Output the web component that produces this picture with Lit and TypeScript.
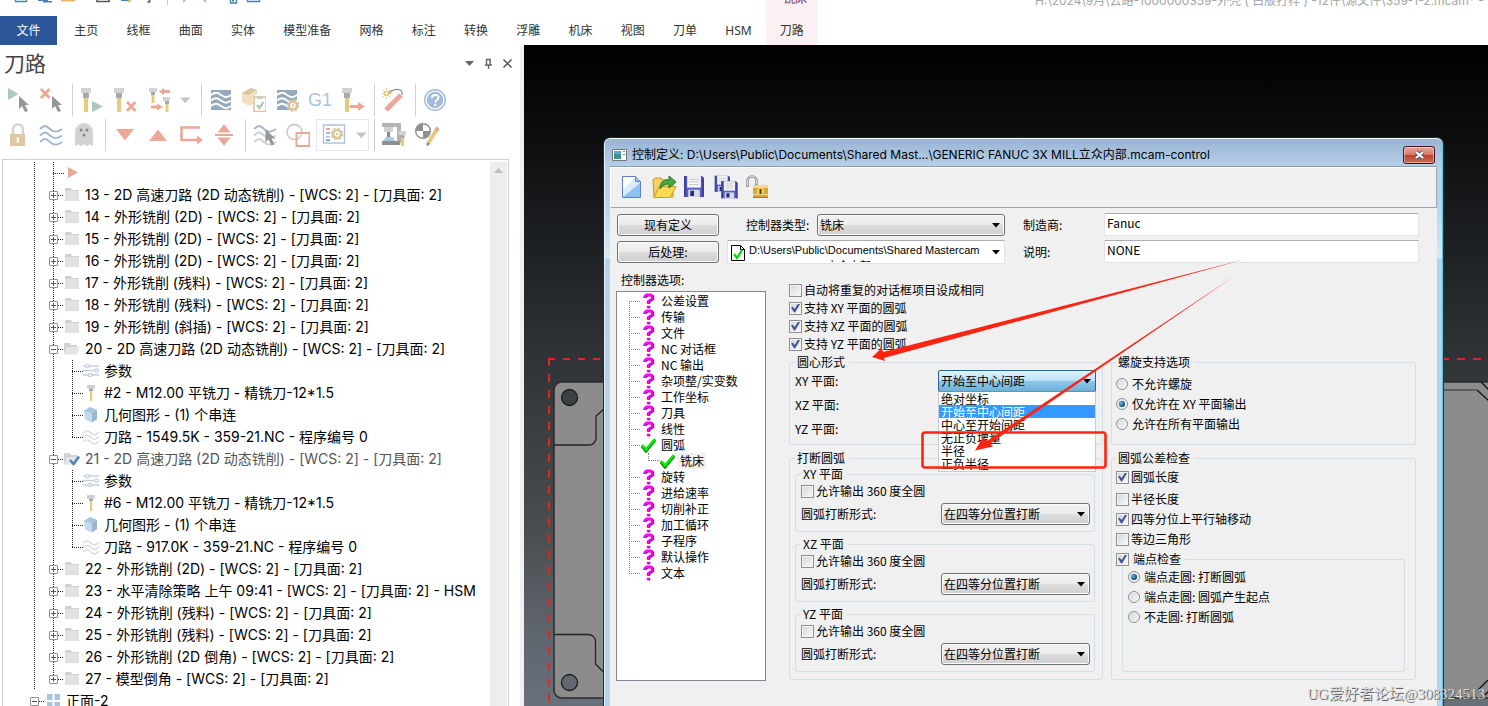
import { LitElement, html, svg, css, nothing } from "lit";
import { customElement } from "lit/decorators.js";
import { classMap } from "lit/directives/class-map.js";

const cjk = css`"Noto Sans CJK SC", sans-serif`;
const ui = css`"Noto Sans", "Noto Sans CJK SC", sans-serif`;
const wide = css`Inter, "Noto Sans CJK SC", sans-serif`;

/* ---------- shared drawing parts ---------- */

const icon = (body: unknown, w = 24, h = 24) =>
  html`<svg width=${w} height=${h} viewBox="0 0 ${w} ${h}" fill="none" aria-hidden="true">${body}</svg>`;

const cursor = (x: number, y: number) =>
  svg`<path transform="translate(${x} ${y})" d="M0 0v13l3-3 3 6 3-1-3-6h4z" fill="#979797"/>`;
const cross = (x: number, y: number) =>
  svg`<path transform="translate(${x} ${y})" d="M1 1l8.500 9M9.500 1L1 10" stroke="#eba898" stroke-width="2.800"/>`;
const cutter = svg`<path d="M1 0h10v5H1z" fill="#d3d3d3"/><path d="M3 5h6v5H3z" fill="#a9a9a9"/><path d="M4 10h4v14H4z" fill="#e8ca7d"/>`;
const smallCutter = (x: number, y: number) =>
  svg`<g transform="translate(${x} ${y})"><path d="M0 0h8v4H0z" fill="#d3d3d3"/><path d="M2 4h4v3H2z" fill="#a9a9a9"/><path d="M2.500 7h3v8h-3z" fill="#e8ca7d"/></g>`;
const waveBox = svg`<path d="M2 2h20v20H2z" fill="#95a9bd"/><path d="M2 7c4-3 6-3 10 0s6 3 10 0M2 12.500c4-3 6-3 10 0s6 3 10 0M2 18c4-3 6-3 10 0s6 3 10 0" stroke="#fff" stroke-width="1.800"/>`;
const waves = (a: string, b: string) =>
  svg`<path d="M1 6c4-4 6-4 10 0s8 3 12 0" stroke=${a} stroke-width="1.800"/><path d="M1 12.500c4-4 6-4 10 0s8 3 12 0M1 19c4-4 6-4 10 0s8 3 12 0" stroke=${b} stroke-width="1.800"/>`;
const gear = (x: number, y: number) =>
  svg`<g transform="translate(${x} ${y})"><circle r="4" fill="#fff" stroke="#dbc49b" stroke-width="2.600"/><circle r="5.600" stroke="#dbc49b" stroke-width="1.600" stroke-dasharray="2.200 2.200"/><circle r="1.200" fill="#dbc49b"/></g>`;

const toolIcons: Record<string, unknown> = {
  selectAll: svg`<path d="M2 0l10.500 6L2 12z" fill="#a9c9bb"/>${cursor(13, 8)}`,
  selectNone: svg`${cross(1, 0)}${cursor(13, 8)}`,
  regen: svg`${cutter}<path d="M12 13l11 5.500L12 24z" fill="#a9c9bb"/>`,
  regenDirty: svg`${cutter}${cross(13, 13)}`,
  swap: svg`${smallCutter(3, 0)}${smallCutter(17, 9)}<path d="M24 3.500h-7M5 19h7" stroke="#eba898" stroke-width="3"/><path d="M18 0v7l-5-3.500zM11 15.500v7l6-3.500z" fill="#eba898"/>`,
  backplot: waveBox,
  verify: svg`<path d="M0 5l9-5 6 2v4l-4 3v7l-4 2-7-4z" fill="#f2dfbf"/><path d="M0 5l9-5 6 2-9 5z" fill="#d9c3a0"/><path d="M12 9h12v14.500H12z" fill="#fff" stroke="#dbc49b" stroke-width="1.500"/><path d="M15 8h6v3h-6z" fill="#c9c9c9"/><path d="M15 17l2.500 3 4-6" stroke="#a0c6b3" stroke-width="2"/>`,
  simulate: svg`${waveBox}${gear(18, 17.5)}`,
  post: svg`${cutter}<path d="M9 18.500h9" stroke="#eba898" stroke-width="3"/><path d="M17 14v9l7-4.500z" fill="#eba898"/>`,
  wand: svg`<path d="M4 22L19 7" stroke="#eba898" stroke-width="5"/><path d="M7 5c5-5 15-5 13 2" stroke="#8c8c8c" stroke-width="1.200"/><circle cx="4.500" cy="5.500" r="2" stroke="#e8ca7d" stroke-width="1.400"/><path d="M4.500 0v2M4.500 9v2M0 5.500h2M7 5.500h2.500M1 2l1.500 1.500M8 2L6.500 3.500M1 9l1.500-1.500M8 9L6.500 7.500" stroke="#e8ca7d"/>`,
  help: svg`<circle cx="12" cy="12" r="10.300" stroke="#a3bbd9" stroke-width="1.400"/><circle cx="12" cy="12" r="8.300" fill="#a3bbd9"/><path d="M9 10c0-4 6.500-4 6.500-.500 0 2.200-3.200 2.500-3.200 5M12.300 15.800v2.200" stroke="#fff" stroke-width="2"/>`,
  lock: svg`<path d="M7 12V6.500a5 5 0 0 1 10 0V12" stroke="#d3d3d3" stroke-width="2.400"/><path d="M4 11h15v12H4z" fill="#dfc9a5"/><path d="M10.500 14.500h2.500v2l-.500 3.500h-1.500z" fill="#fff"/>`,
  display: waves("#a3b8ce", "#a3b8ce"),
  ghost: svg`<path d="M3 23.500V9a9 9 0 0 1 18 0v14.500l-3-2.500-3 2.500-3-2.500-3 2.500-3-2.500z" fill="#d3d3d3"/><circle cx="9" cy="7" r="1.500" fill="#888"/><circle cx="15" cy="7" r="1.500" fill="#888"/><circle cx="12" cy="12" r="1.500" fill="#888"/>`,
  down: svg`<path d="M3 6h18l-9 11.500z" fill="#eba898"/>`,
  up: svg`<path d="M3 18h18L12 6.500z" fill="#eba898"/>`,
  loop: svg`<path d="M21 4.500H2.500v12.500H19" stroke="#eba898" stroke-width="2.600"/><path d="M18 12.500v9l6-4.500z" fill="#eba898"/>`,
  split: svg`<path d="M5.500 9.500L12 1l6.500 8.500zM5.500 14.500L12 23l6.500-8.500z" fill="#eba898"/><path d="M3 12h18" stroke="#eba898" stroke-width="2"/>`,
  wavesCursor: svg`${waves("#a3b8ce", "#cfcfcf")}${cursor(12.5, 6.5)}`,
  shapes: svg`<circle cx="8.500" cy="9" r="7.500" stroke="#cfcfcf" stroke-width="1.800"/><path d="M10.500 10h13v13h-13z" stroke="#eba898" stroke-width="2"/>`,
  list: svg`<path d="M1.500 2h21v18h-21z" stroke="#a9c4de" stroke-width="1.400"/><path d="M4 5h4v2H4z" fill="#eba898"/><path d="M4 9h4v2H4z" fill="#a0c6b3"/><path d="M4 13h4v1.500H4z" fill="#a9c4de"/><path d="M4 16.500h4v1.500H4z" fill="#888"/>${gear(15, 11)}`,
  machine: svg`<path d="M0 0h19v20h-4V4H0z" fill="#b4b4b4"/><path d="M2 4h9v5H2z" fill="#d3d3d3"/><path d="M5 9h3v5H5z" fill="#888"/><path d="M1 18l3-4h7l2 4z" fill="#a9cbe8"/><path d="M0 18h18v4H0z" fill="#8f8f8f"/>${smallCutter(16.5, 8)}`,
  pencil: svg`<circle cx="8" cy="8" r="7.300" fill="#fff" stroke="#8f8f8f" stroke-width="1.400"/><path d="M8 8V.700A7.300 7.300 0 0 0 .700 8zM8 8v7.300A7.300 7.300 0 0 0 15.300 8z" fill="#8f8f8f"/><path d="M22 6l-8.500 14" stroke="#e8ca7d" stroke-width="4"/><path d="M23 4.500l-2 3.500" stroke="#eba898" stroke-width="4"/><path d="M11.800 19l3.400 2-3.700 2.500z" fill="#888"/>`,
};

const caret = svg`<path d="M1 9.500h10.500L6.200 15.200z" fill="#c4c4c4"/>`;

const treeIcons: Record<string, unknown> = {
  arrow: svg`<path d="M4 2l10 5.500L4 13z" fill="#eba898"/>`,
  folder: svg`<path d="M1 1h6l1 2h7v3H1z" fill="#d2d2d5"/><path d="M1 4h14v10H1z" fill="#e2e2e4"/>`,
  open: svg`<path d="M0 2h6l1 2h6v9H0z" fill="#d2d2d5"/><path d="M3 6h13l-3 7.500H0z" fill="#e6e6e6"/>`,
  checked: svg`<path d="M0 2h6l1 2h6v9H0z" fill="#d2d2d5"/><path d="M3 6h13l-3 7.500H0z" fill="#e6e6e6"/><path d="M6 9l3.500 4L15 5.500" stroke="#4a83bd" stroke-width="2.400"/>`,
  params: svg`<path d="M0 3h16M0 7.500h16M0 12h16" stroke="#cdcdcd" stroke-width="1.400"/><g fill="#fff" stroke="#bdd3e8" stroke-width="1.300"><circle cx="4.500" cy="3" r="1.700"/><circle cx="13.500" cy="7.500" r="1.700"/><circle cx="7" cy="12" r="1.700"/></g>`,
  cutter: svg`<path d="M4 0h8v3.500H4z" fill="#cfcfcf"/><path d="M6 3.500h4V6H6z" fill="#a9a9a9"/><path d="M7 6h2.200v10H7z" fill="#e8ca7d"/>`,
  solid: svg`<path d="M1 4l6-4 7 3v9l-5 3.500-7-3z" fill="#c3d9ec"/><path d="M1 4l6-4 7 3-5 3z" fill="#a9c5de"/><path d="M9 6l5-3v9l-5 3.500z" fill="#9cb6cf"/>`,
  path: svg`<path d="M0 4c3-3 5-3 8 0s5 2 8-1M0 8.500c3-3 5-3 8 0s5 2 8-1M0 13c3-3 5-3 8 0s5 2 8-1" stroke="#dadada" stroke-width="1.300"/>`,
  group: svg`<path d="M2 1h5.500v6H2zM9.500 1H15v6H9.500zM2 9h5.500v6H2zM9.500 9H15v6H9.500z" fill="#a9c4de"/>`,
};

const ribbonTabs = ["主页", "线框", "曲面", "实体", "模型准备", "网格", "标注", "转换", "浮雕", "机床", "视图", "刀单", "HSM", "刀路"];

type TreeRow = { level: number; icon: string; text: string; state?: "+" | "-"; last?: boolean; dim?: boolean };
const op = (n: number, name: string): TreeRow => ({ level: 1, icon: "folder", state: "+", text: `${n} - ${name} - [WCS: 2] - [刀具面: 2]` });
const children = (tool: string, size: string): TreeRow[] => [
  { level: 2, icon: "params", text: "参数" },
  { level: 2, icon: "cutter", text: `${tool} - M12.00 平铣刀 - 精铣刀-12*1.5` },
  { level: 2, icon: "solid", text: "几何图形 - (1) 个串连" },
  { level: 2, icon: "path", text: `刀路 - ${size} - 359-21.NC - 程序编号 0`, last: true },
];
const treeRows: TreeRow[] = [
  { level: 1, icon: "arrow", text: "" },
  op(13, "2D 高速刀路 (2D 动态铣削)"),
  op(14, "外形铣削 (2D)"),
  op(15, "外形铣削 (2D)"),
  op(16, "外形铣削 (2D)"),
  op(17, "外形铣削 (残料)"),
  op(18, "外形铣削 (残料)"),
  op(19, "外形铣削 (斜插)"),
  { ...op(20, "2D 高速刀路 (2D 动态铣削)"), icon: "open", state: "-" },
  ...children("#2", "1549.5K"),
  { ...op(21, "2D 高速刀路 (2D 动态铣削)"), icon: "checked", state: "-", dim: true },
  ...children("#6", "917.0K"),
  op(22, "外形铣削 (2D)"),
  { level: 1, icon: "folder", state: "+", text: "23 - 水平清除策略 上午 09:41 - [WCS: 2] - [刀具面: 2] - HSM" },
  op(24, "外形铣削 (残料)"),
  op(25, "外形铣削 (残料)"),
  op(26, "外形铣削 (2D 倒角)"),
  { ...op(27, "模型倒角"), last: true },
  { level: 0, icon: "group", text: "正面-2", state: "-", last: true },
];

/* ---------- toolpath manager panel ---------- */

@customElement("toolpath-panel")
class ToolpathPanel extends LitElement {
  static styles = css`
    :host { display: flex; flex-direction: column; width: 524px; flex: none; box-sizing: border-box; background: #fff; border-right: 4px solid #f0f0f0; font-family: ${wide}; }
    button { appearance: none; border: 0; padding: 0; background: none; display: grid; place-items: center; font: inherit; }
    .head { display: flex; align-items: center; box-sizing: border-box; height: 37px; padding: 0 5px 4px 4px; }
    h1 { margin: 0 auto 0 0; font: 400 21px/28px ${cjk}; color: #444; }
    .head button { width: 15px; height: 16px; margin: 2px 0 0 4px; }
    .bars { display: grid; gap: 3px; padding: 2px 6px 8px; }
    .bar { display: flex; gap: 9px; height: 32px; }
    .bar button { width: 24px; }
    .bar .caret { width: 13px; }
    .bar .g1 { font: 18px/24px "Liberation Sans", sans-serif; color: #a9c4e0; }
    .sep { width: 1px; background: #d0d0d0; margin-right: -2px; }
    .split { display: flex; box-sizing: border-box; width: 53px; margin: 0 -4px 0 -3px; padding-left: 5px; gap: 9px; border: 1px solid #e8e8e8; }
    .treebox { flex: 1; min-height: 0; display: flex; margin: 0 11px 0 2px; border: 1px solid #d0d0d0; border-bottom: 0; }
    .tree { flex: 1; padding: 2px 0 0 27px; overflow: hidden; font-size: 14px; line-height: 20px; color: #000; }
    .row { display: flex; align-items: center; height: 22px; white-space: nowrap; }
    .row svg { flex: none; }
    .guide, .node { flex: none; align-self: stretch; width: 19px; background: repeating-linear-gradient(#222 0 1px, transparent 1px 2px) 4px 0 / 1px 22px no-repeat; }
    .node { width: 15px; display: grid; align-items: center; grid-template-columns: 9px 6px; }
    .node.half { background-size: 1px 11px; }
    .node.root { background: none; }
    .box { box-sizing: border-box; width: 9px; height: 9px; border: 1px solid #919191; border-radius: 1px; background: linear-gradient(#3a5a9c, #3a5a9c) center / 5px 1px no-repeat, #fff; }
    .box.plus { background: linear-gradient(#3a5a9c, #3a5a9c) center / 5px 1px no-repeat, linear-gradient(#3a5a9c, #3a5a9c) center / 1px 5px no-repeat, #fff; }
    .dash { height: 1px; background: linear-gradient(90deg, #222 50%, transparent 50%) 0 0 / 2px 1px repeat-x; }
    .dash.long { grid-column: 1 / 3; margin-left: 4px; }
    .text { margin-left: 5px; }
    .dim { color: #555; }
    .scroll { width: 17px; margin: 2px 1px 0 0; background: #ededed; display: grid; justify-items: center; align-content: start; padding-top: 5px; }
  `;
  private tool(name: string, label: string) {
    return html`<button aria-label=${label}>${icon(toolIcons[name])}</button>`;
  }
  private row(r: TreeRow) {
    const guides = Array.from({ length: r.level }, () => html`<span class="guide"></span>`);
    return html`<div class="row" role="treeitem">
      ${guides}
      <span class=${classMap({ node: true, half: !!r.last && r.level > 0, root: r.level === 0 })}>
        ${r.state ? html`<span class=${classMap({ box: true, plus: r.state === "+" })}></span><span class="dash"></span>` : html`<span class="dash long"></span>`}
      </span>
      ${icon(treeIcons[r.icon], 16, 16)}
      <span class=${classMap({ text: true, dim: !!r.dim })}>${r.text}</span>
    </div>`;
  }
  render() {
    const sep = html`<span class="sep"></span>`;
    const drop = html`<button class="caret" aria-label="更多">${icon(caret, 13, 24)}</button>`;
    return html`
      <div class="head">
        <h1>刀路</h1>
        <button aria-label="选项">${icon(svg`<path d="M3 6h9l-4.500 5z" fill="#666"/>`, 15, 16)}</button>
        <button aria-label="固定">${icon(svg`<path d="M5.500 4v5.500M5 4.500h5M9 4v5.500M4 10h7M7.500 10v4" stroke="#666" stroke-width="1.400"/>`, 15, 16)}</button>
        <button aria-label="关闭">${icon(svg`<path d="M3.500 4.500l8 8M11.500 4.500l-8 8" stroke="#555" stroke-width="1.500"/>`, 15, 16)}</button>
      </div>
      <div class="bars">
        <div class="bar">
          ${this.tool("selectAll", "选择全部")}${this.tool("selectNone", "取消选择")}${sep}
          ${this.tool("regen", "重新生成")}${this.tool("regenDirty", "重新生成无效")}${this.tool("swap", "替换刀具")}${drop}${sep}
          ${this.tool("backplot", "模拟")}${this.tool("verify", "验证")}${this.tool("simulate", "仿真")}
          <button class="g1">G1</button>${this.tool("post", "进给")}${sep}
          ${this.tool("wand", "高速")}${sep}${this.tool("help", "帮助")}
        </div>
        <div class="bar">
          ${this.tool("lock", "锁定")}${this.tool("display", "显示刀路")}${this.tool("ghost", "关闭后处理")}${sep}
          ${this.tool("down", "下移")}${this.tool("up", "上移")}${this.tool("loop", "插入")}${this.tool("split", "滚动")}${sep}
          ${this.tool("wavesCursor", "单选刀路")}${this.tool("shapes", "单选图形")}
          <span class="split">${this.tool("list", "显示选项")}${drop}</span>${sep}
          ${this.tool("machine", "机床")}${this.tool("pencil", "编辑")}
        </div>
      </div>
      <div class="treebox">
        <div class="tree" role="tree">${treeRows.map((r) => this.row(r))}</div>
        <div class="scroll">${icon(svg`<path d="M0 6h9L4.500 1z" fill="#bdbdbd"/>`, 9, 7)}</div>
      </div>`;
  }
}

/* ---------- control definition dialog ---------- */

const floppy = svg`<path d="M1 1h17l2 2v18H1z" fill="#5a5fc4"/><path d="M1 1h2v20H1zM18 1l2 2v18h-2z" fill="#3f3f9c"/><path d="M4 1h13v11H4z" fill="#f4f4f4"/><path d="M6 4h9M6 6.500h9M6 9h9" stroke="#c8c8c8"/><path d="M5 14h11v7H5z" fill="#d7d7e8"/><path d="M7 15h3.500v5H7z" fill="#26267c"/>`;

const dialogIcons = [
  svg`<path d="M1.500 1.500h13l5 5v16h-18z" fill="#dcebfb" stroke="#5b7fc0"/><path d="M2 22L19 8v14z" fill="#8fc0f5"/><path d="M2 2h12l-12 13z" fill="#fff"/><path d="M14.500 1.500v5h5" fill="#9cc6f5" stroke="#5b7fc0"/>`,
  svg`<path d="M1 5l2-2h6l1 2h11v17H2z" fill="#f6d264" stroke="#c8921a"/><path d="M2 22.500l5-11h17l-6 11z" fill="#ffd94f" stroke="#d49a1c"/><path d="M8 14c0-7 4-10 9-9V1l7 6-7 6V9c-4 0-6 1-9 5z" fill="#44a845" stroke="#1f7a28"/>`,
  svg`<g transform="scale(1.050)">${floppy}</g>`,
  svg`<g transform="scale(.800)">${floppy}</g><g transform="translate(6.500 5.500) scale(.850)">${floppy}</g>`,
  svg`<path d="M2.500 12V6a4.500 4.500 0 0 1 9 0v4" stroke="#8b8b8b" stroke-width="2.600"/><path d="M2.500 11V6a4.500 4.500 0 0 1 9 0v3" stroke="#e4e4e4"/><path d="M8 10h15v13H8z" fill="#e0a338"/><path d="M8 10h15v3H8zM8 19h15v1H8z" fill="#f6d98c"/><path d="M8 22h15v1H8z" fill="#b07a1a"/><circle cx="15.500" cy="16" r="3.500" fill="#f3cf74"/><path d="M14.500 14h2v5h-2z" fill="#5d3c05"/>`,
];

const controlOptions = ["公差设置", "传输", "文件", "NC 对话框", "NC 输出", "杂项整/实变数", "工作坐标", "刀具", "线性", "圆弧", "铣床", "旋转", "进给速率", "切削补正", "加工循环", "子程序", "默认操作", "文本"];
const question = svg`<g stroke-width="2.400"><path d="M2.500 5V3.700L4.500 2.200H8.500L10 3.500V6L6 9v2M6 13v2.300" stroke="#6a006a"/><path d="M1.500 5V3.500L3.500 1.800H7.500L9 3V5.800L5 8.500V11M5 12.800v2.400" stroke="#ff00ff"/></g>`;
const tick = svg`<path d="M1 9l4 5L14 3" stroke="#0a7a0a" stroke-width="3"/><path d="M1 8l4 4.500L14 2" stroke="#00f000" stroke-width="2.600"/>`;

@customElement("control-dialog")
class ControlDialog extends LitElement {
  static styles = css`
    :host { display: flex; flex-direction: column; box-sizing: border-box; padding: 0 7px; border: 1px solid #1c2a38; border-radius: 7px 7px 0 0; background: linear-gradient(#98b4d2, #b9d1ea 30px, #b9d1ea 60px, #dbe7f4 120px, #b9d1ea 121px); box-shadow: inset 0 1px #fff, inset 1px 0 #dff3fb, inset -1px 0 #4fc8e0; color: #000; font: 12px/16px ${cjk}; }
    * { box-sizing: border-box; }
    button, select, input { font: inherit; color: inherit; }
    .title { display: flex; align-items: center; height: 28px; padding: 5px 1px 0 1px; gap: 4px; font-family: ${wide}; white-space: nowrap; }
    .title h2 { flex: 1; margin: 0; font-size: 12px; font-weight: 400; }
    .close { display: grid; place-items: center; width: 32px; height: 18px; padding: 0; border: 1px solid #4a1220; border-radius: 3px; background: linear-gradient(#e5a79b, #d8796a 48%, #b9402c 50%, #cf6e54); box-shadow: inset 0 0 0 1px #ffffff66; }
    .content { flex: 1; min-height: 0; overflow: hidden; background: #f0f0f0; border-top: 1px solid #8f9cad; margin: 0 -1px; }
    .tools { display: flex; gap: 7px; height: 41px; padding: 7px 10px 0; border: 1px solid #fff; border-bottom-color: #a0a3ad; border-right-color: #a0a3ad; }
    .tools button { width: 24px; height: 24px; padding: 0; border: 0; background: none; }
    .form { display: grid; grid-template-columns: 102px 278px 74px 1fr; column-gap: 8px; row-gap: 4px; grid-auto-rows: 23px; align-items: center; padding: 5px 18px 0 7px; }
    .form .lead { padding-left: 10px; }
    .form input { min-width: 0; margin-left: 9px; }
    .push { height: 22px; padding: 0; border: 1px solid #707070; border-radius: 3px; background: linear-gradient(#f2f2f2, #ebebeb 50%, #dddddd 50%, #cfcfcf); box-shadow: inset 0 0 0 1px #fcfcfc; }
    .type { display: flex; align-items: center; justify-content: space-between; padding-left: 19px; }
    .pick { display: grid; align-items: center; width: 188px; }
    .pick.medium { width: 149px; }
    .pick.wide { width: 158px; position: relative; }
    .pick select { grid-area: 1 / 1; width: 100%; height: 22px; appearance: none; margin: 0; padding: 0 20px 0 2px; border: 1px solid #707070; border-radius: 3px; background: linear-gradient(#f2f2f2, #ebebeb 50%, #dddddd 50%, #cfcfcf); box-shadow: inset 0 0 0 1px #fcfcfc; }
    .pick.wide select { border-color: #2c628b; border-radius: 2px; background: linear-gradient(#e3f2fb, #b9dff5 50%, #8ec8e8 50%, #6db1da); box-shadow: none; }
    .pick > svg { grid-area: 1 / 1; justify-self: end; margin-right: 4px; pointer-events: none; }
    .field { height: 23px; padding: 0 2px 4px; border: 1px solid #e2e3ea; border-top-color: #abadb3; border-radius: 1px; background: #fff; outline: 0; }
    .path { display: flex; align-items: center; height: 24px; padding: 0 3px; border: 1px solid #e2e3ea; border-top-color: #abadb3; background: #fff; overflow: hidden; text-align: left; }
    .path svg { flex: none; }
    .path .lines { flex: 1; margin-left: 3px; font: 11px/16px "Liberation Sans", ${cjk}; height: 20px; overflow: hidden; white-space: nowrap; }
    .path .arrow { display: grid; }
    .cols { display: grid; grid-template-columns: 150px 314px 1fr; padding: 9px 21px 0 6px; }
    .side h3 { margin: 0 0 3px 5px; font-size: 12px; font-weight: 400; }
    .options { height: 390px; border: 1px solid #828790; background: #fff; padding: 1px 0 0 12px; }
    .item { display: flex; height: 16px; align-items: center; }
    .stem { flex: none; align-self: stretch; display: grid; align-items: center; width: 12px; background: repeating-linear-gradient(#808080 0 1px, transparent 1px 2px) 0 0 / 1px 16px no-repeat; }
    .stem i { height: 1px; background: linear-gradient(90deg, #808080 50%, transparent 50%) 0 0 / 2px 1px repeat-x; }
    .item:first-child .stem { background-position: 0 8px; }
    .item:last-child .stem { background-size: 1px 8px; }
    .item svg { flex: none; margin-right: 5px; }
    .item .gap { width: 2px; }
    .item.nested .gap { width: 7px; }
    .item.nested .elbow { width: 12px; height: 8px; align-self: start; border-left: 1px dotted #808080; border-bottom: 1px dotted #808080; }
    .item.nested .name { background: #f0f0f0; padding: 0 2px; margin-left: -2px; }
    .mid { margin: 0 -23px 0 23px; padding-top: 9px; }
    .far { margin-left: 31px; padding-top: 83px; }
    label.check { display: flex; align-items: center; gap: 2px; height: 18px; white-space: nowrap; }
    label.r20 { height: 20px; }
    label.r24 { height: 24px; }
    label.radio { gap: 4px; }
    input[type="checkbox"], input[type="radio"] { appearance: none; flex: none; display: grid; place-items: center; margin: 0; width: 13px; height: 13px; border: 1px solid #8e8f8f; background: linear-gradient(135deg, #cfd3da, #fbfbfb); box-shadow: inset 0 0 0 1px #f4f4f4; }
    input[type="radio"] { width: 12px; height: 12px; border-radius: 50%; }
    input[type="checkbox"]:checked::before { content: ""; width: 9px; height: 9px; background: #43549b; clip-path: polygon(0 45%, 20% 35%, 40% 62%, 80% 0, 100% 8%, 45% 100%, 35% 100%); }
    input[type="radio"]:checked::before { content: ""; width: 6px; height: 6px; border-radius: 50%; background: radial-gradient(circle at 35% 35%, #5fc0e8, #12406a 70%); }
    fieldset { margin: 0; min-width: 0; padding: 0 6px 3px 5px; border: 1px solid #d2dde6; border-radius: 3px; }
    legend { height: 14px; line-height: 14px; padding: 0 4px 0 2px; margin: 0; white-space: nowrap; }
    .mid > fieldset { margin-top: 2px; }
    .mid > fieldset + fieldset { margin-top: 6px; padding: 2px 7px 7px 5px; display: grid; row-gap: 5px; }
    fieldset fieldset { padding: 0 4px 4px 5px; }
    .line { display: flex; align-items: center; justify-content: space-between; height: 24px; }
    .line.tall { height: 26px; }
    .far > fieldset { padding: 5px 6px 10px 4px; }
    .far > fieldset + fieldset { margin-top: 6px; padding: 0 10px 7px 4px; }
    .far fieldset fieldset { margin: 3px 0 0 6px; padding: 1px 5px 44px 5px; }
    .far fieldset fieldset legend { margin-left: -12px; padding-left: 0; background: #f0f0f0; }
    .far fieldset fieldset legend label.check { height: 14px; gap: 4px; }
    .menu { position: absolute; z-index: 2; top: 21px; left: 0; right: 0; margin: 0; padding: 0 0 1px; list-style: none; background: #fff; border: 1px solid #c9cbd8; border-top-color: #7c8ba0; }
    .menu li { height: 13px; padding-left: 2px; line-height: 14px; overflow: hidden; }
    .menu .on { background: #3399ff; color: #fff; outline: 1px dotted #e0791a; outline-offset: -1px; }
  `;
  private pick(id: string, cls: string, value: string, menu: unknown = nothing) {
    return html`<span class="pick ${cls}"><select id=${id}><option>${value}</option></select>
      ${icon(svg`<path d="M0 1h8L4 5.500z" fill="#000"/>`, 9, 6)}${menu}</span>`;
  }
  private check(text: string, on = false, cls = "") {
    return html`<label class="check ${cls}"><input type="checkbox" .checked=${on} />${text}</label>`;
  }
  private radio(name: string, text: string, on = false) {
    return html`<label class="check radio r20"><input type="radio" name=${name} .checked=${on} />${text}</label>`;
  }
  private option(name: string) {
    const nested = name === "铣床";
    const ok = nested || name === "圆弧";
    return html`<div class=${classMap({ item: true, nested })} role="treeitem">
      <span class="stem">${nested ? nothing : html`<i></i>`}</span>
      ${nested ? html`<span class="gap"></span><span class="elbow"></span>` : ok ? nothing : html`<span class="gap"></span>`}
      ${ok ? icon(tick, 15, 16) : icon(question, 13, 16)}
      <span class="name">${name}</span>
    </div>`;
  }
  private plane(name: string) {
    const id = `break-${name}`;
    return html`<fieldset>
      <legend>${name} 平面</legend>
      ${this.check("允许输出 360 度全圆", false, "r20")}
      <div class="line tall"><label for=${id}>圆弧打断形式:</label>${this.pick(id, "medium", "在四等分位置打断")}</div>
    </fieldset>`;
  }
  render() {
    const menu = html`<ul class="menu" role="listbox">
      ${["绝对坐标", "开始至中心间距", "中心至开始间距", "无正负增量", "半径", "正负半径"].map(
        (t, i) => html`<li role="option" class=${classMap({ on: i === 1 })}>${t}</li>`)}
    </ul>`;
    return html`
      <div class="title">
        ${icon(svg`<path d="M.500 1.500h14v11H.500z" fill="#fff" stroke="#777"/><path d="M2 3h7v8H2z" fill="#3f8f8a"/><path d="M2 3h7v3H2z" fill="#5aa7c8"/><path d="M11 3.500h2M11 6.500h2" stroke="#5c86c0"/>`, 16, 14)}
        <h2>控制定义: D:\\Users\\Public\\Documents\\Shared Mast...\\GENERIC FANUC 3X MILL立众内部.mcam-control</h2>
        <button class="close" aria-label="关闭">${icon(svg`<path d="M2 2l7 6M9 2L2 8" stroke="#4b5563" stroke-width="4"/><path d="M2 2l7 6M9 2L2 8" stroke="#fff" stroke-width="2.200"/>`, 11, 10)}</button>
      </div>
      <div class="content">
        <div class="tools">
          ${["新建", "打开", "保存", "另存为", "解锁"].map((n, i) => html`<button aria-label=${n}>${icon(dialogIcons[i])}</button>`)}
        </div>
        <div class="form">
          <button class="push">现有定义</button>
          <div class="type"><label for="ctl">控制器类型:</label>${this.pick("ctl", "", "铣床")}</div>
          <label class="lead" for="maker">制造商:</label>
          <input class="field" id="maker" value="Fanuc" />
          <button class="push">后处理:</button>
          <button class="path" aria-haspopup="listbox">
            ${icon(svg`<path d="M.500 2.500h9l4 4v11H.500z" fill="#fff" stroke="#000"/><path d="M9.500 2.500v4h4" stroke="#000"/><path d="M3 11l3 4 5-8" stroke="#00e000" stroke-width="2.200"/>`, 15, 18)}
            <span class="lines">D:\\Users\\Public\\Documents\\Shared Mastercam<br />2022\\mill\\Posts\\立众内部.pst</span>
            <span class="arrow">${icon(svg`<path d="M0 1h8L4 5.500z" fill="#000"/>`, 9, 6)}</span>
          </button>
          <label class="lead" for="note">说明:</label>
          <input class="field" id="note" value="NONE" />
        </div>
        <div class="cols">
          <section class="side">
            <h3>控制器选项:</h3>
            <div class="options" role="tree">${controlOptions.map((o) => this.option(o))}</div>
          </section>
          <section class="mid">
            ${this.check("自动将重复的对话框项目设成相同")}
            ${["XY", "XZ", "YZ"].map((p) => this.check(`支持 ${p} 平面的圆弧`, true))}
            <fieldset>
              <legend>圆心形式</legend>
              <div class="line"><label for="center">XY 平面:</label>${this.pick("center", "wide", "开始至中心间距", menu)}</div>
              <div class="line">XZ 平面:</div>
              <div class="line">YZ 平面:</div>
            </fieldset>
            <fieldset>
              <legend>打断圆弧</legend>
              ${["XY", "XZ", "YZ"].map((p) => this.plane(p))}
            </fieldset>
          </section>
          <section class="far">
            <fieldset>
              <legend>螺旋支持选项</legend>
              ${this.radio("helix", "不允许螺旋")}
              ${this.radio("helix", "仅允许在 XY 平面输出", true)}
              ${this.radio("helix", "允许在所有平面输出")}
            </fieldset>
            <fieldset>
              <legend>圆弧公差检查</legend>
              ${this.check("圆弧长度", true, "r24")}
              ${this.check("半径长度", false, "r20")}
              ${this.check("四等分位上平行轴移动", true, "r20")}
              ${this.check("等边三角形", false, "r20")}
              <fieldset>
                <legend>${this.check("端点检查", true)}</legend>
                ${this.radio("end", "端点走圆: 打断圆弧", true)}
                ${this.radio("end", "端点走圆: 圆弧产生起点")}
                ${this.radio("end", "不走圆: 打断圆弧")}
              </fieldset>
            </fieldset>
          </section>
        </div>
      </div>`;
  }
}

/* ---------- application shell ---------- */

@customElement("app-root")
class AppRoot extends LitElement {
  static styles = css`
    :host { display: flex; flex-direction: column; height: 100vh; overflow: hidden; background: #fff; font-family: ${cjk}; }
    .top { display: flex; flex: none; height: 16px; }
    .quick { width: 766px; flex: none; }
    .quick svg { display: block; }
    .context { display: flex; flex: none; align-items: end; justify-content: center; width: 52px; padding: 0 0 10px 6px; box-sizing: border-box; background: #fbf0f2; color: #7c2b35; font-size: 12px; line-height: 16px; overflow: hidden; }
    .filename { display: flex; flex: 1; align-items: end; min-width: 0; padding: 0 0 7px 217px; overflow: hidden; color: #a4a4a4; font: 12px/16px ${wide}; white-space: pre; box-sizing: border-box; }
    .tabs { display: flex; flex: none; justify-content: space-between; width: 818px; max-width: 100%; height: 29px; }
    .tabs button { appearance: none; border: 0; background: none; margin: 0; padding: 0 14px; font: 12px/16px ${ui}; color: #333; white-space: nowrap; }
    .tabs .file { width: 57px; margin-right: 3px; padding: 0; background: #2b579a; color: #fff; }
    .tabs .on { width: 52px; padding: 0; background: #fbf0f2; }
    .main { display: flex; flex: 1; min-height: 0; }
    .view { position: relative; flex: 1; min-width: 0; overflow: hidden; background: linear-gradient(#000, #0c0d0f 14%, #2d3134 45%, #4a4e50 74%, #5e646c 88%, #68707a); }
    .layer { position: absolute; inset: 0; width: 100%; height: 100%; pointer-events: none; }
    .window { position: absolute; isolation: isolate; left: 79px; right: 44px; top: 92px; bottom: 0; border-bottom: 0; }
    .mark { position: absolute; right: 3px; bottom: 2px; font: 15px/20px "Liberation Serif", ${cjk}; color: #dcdcdc; text-shadow: 1px 1px 0 #666; white-space: nowrap; }
  `;
  render() {
    return html`
      <div class="top">
        <div class="quick">
          ${icon(svg`
            <path d="M15.500 -4v5.500h11V-4M230.500 -4v7h6v-7M247.500 -4v5.500h12V-4" stroke="#4a7fb5" stroke-width="1.400"/>
            <path d="M38 -2h10v3H38zM43 1h9v1.500h-9zM121 -2h10v3h-10z" fill="#4a7fb5"/><path d="M61 -2h14v3.500H61z" fill="#e8b860"/>
            <path d="M97 -2v3.500h12V-2M149.500 -3v5h-2" stroke="#555" stroke-width="1.600"/><path d="M128 2l5-4" stroke="#e8b860" stroke-width="2"/>
            <path d="M167.500 0v5" stroke="#ccc"/><path d="M183 2l3-3M206 2l-3-3" stroke="#9db8d8" stroke-width="1.600"/>
            <path d="M233 0v1.500" stroke="#3d9a6a" stroke-width="2"/>`, 280, 6)}
        </div>
        <div class="context">铣床</div>
        <div class="filename">H:\\2024\\9月\\云路-1000000359-外壳 ( 白版打样 ) -12件\\源文件\\359-1-2.mcam* - Mastercam</div>
      </div>
      <nav class="tabs">
        <button class="file">文件</button>
        ${ribbonTabs.map((t, i) => html`<button class=${classMap({ on: i === ribbonTabs.length - 1 })}>${t}</button>`)}
      </nav>
      <div class="main">
        <toolpath-panel></toolpath-panel>
        <div class="view">
          <svg class="layer" fill="none" aria-hidden="true">
            <g transform="translate(-524 -45)">
              <path d="M1500 382H562a8 8 0 0 0-8 8v300a8 8 0 0 0 8 8h938z" fill="#8c8c8c" stroke="#2b2b2b" stroke-width="1.500"/>
              <path d="M554 445h35a7 7 0 0 0 7-7v-22l8-7M554 634.500h34a7 7 0 0 1 7.500 7V664l8 8" stroke="#222" stroke-width="1.300"/>
              <circle cx="569.500" cy="397.500" r="8" fill="#3c4044" stroke="#1b1b1b" stroke-width="1.300"/>
              <circle cx="569.500" cy="682.500" r="8" fill="#626972" stroke="#1b1b1b" stroke-width="1.300"/>
              <path d="M1481 382l8 8M1477 390l12 11M1478 690l10-10M1483 697l6-6" stroke="#111" stroke-width="1.300"/>
              <path d="M1444 390h33" stroke="#4d4d4d" stroke-width="1.400"/>
              <path d="M549 358v345" stroke="#e02424" stroke-width="2" stroke-dasharray="8 8"/>
              <path d="M548 359h60" stroke="#e02424" stroke-width="2" stroke-dasharray="7 8"/>
              <path d="M1441 359h47" stroke="#e02424" stroke-width="2" stroke-dasharray="8 8"/>
            </g>
          </svg>
          <control-dialog class="window"></control-dialog>
          <svg class="layer" aria-hidden="true">
            <g transform="translate(-524 -45)" fill="#fd2412">
              <path d="M1246 259L883 352l-1-4-10 9 13 4-1-3z"/>
              <path d="M1236 275L987 441l-4-4-8 13.500 18-4-3-3z"/>
              <rect x="922.500" y="432.500" width="183" height="35" rx="2.500" fill="none" stroke="#fd2412" stroke-width="2.600"/>
            </g>
          </svg>
          <span class="mark">UG爱好者论坛@308324513</span>
        </div>
      </div>`;
  }
}
